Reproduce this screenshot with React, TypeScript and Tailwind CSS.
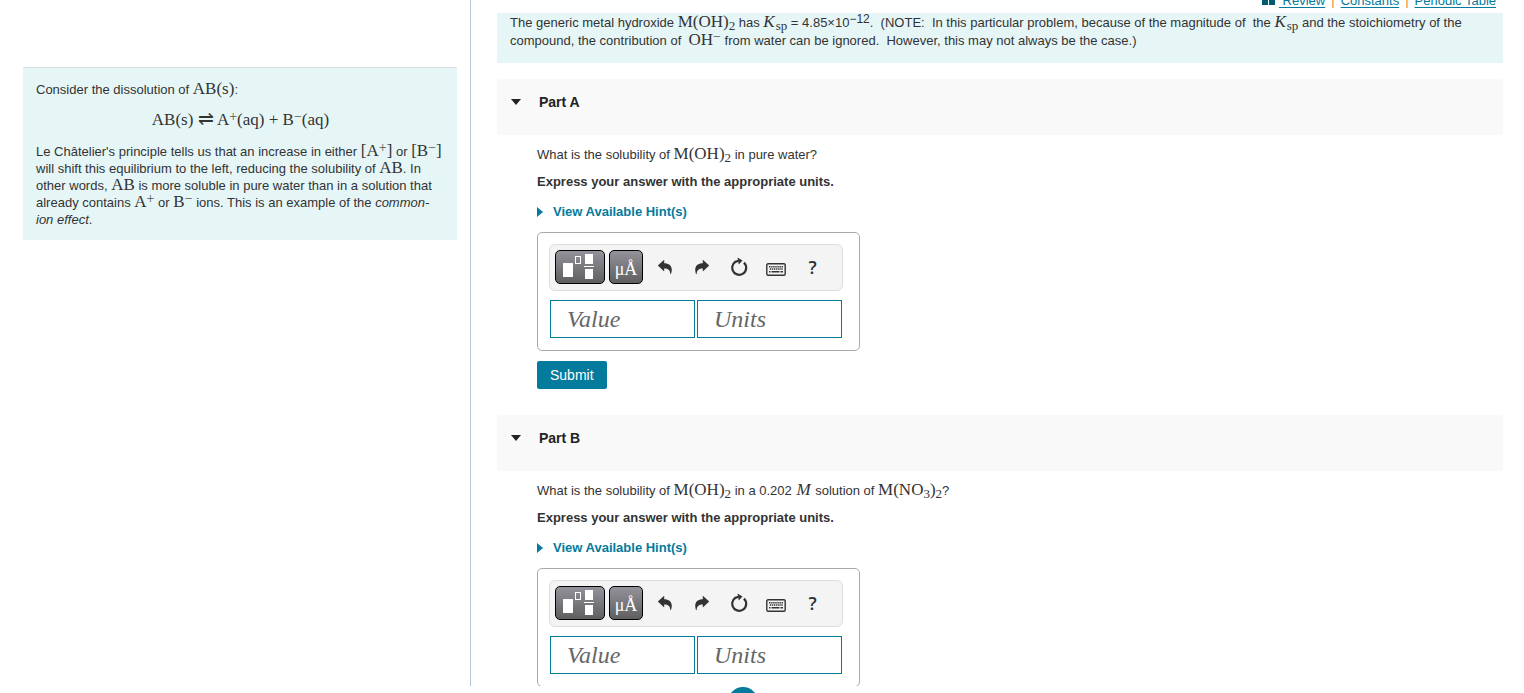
import type { ReactNode } from "react";

function Chem({ children }: { children: ReactNode }) {
  return (
    <span className="font-['Liberation_Serif',serif] text-[17px] leading-[0] whitespace-nowrap">
      {children}
    </span>
  );
}

function Sub({ children }: { children: ReactNode }) {
  return <sub className="text-[13px]">{children}</sub>;
}

function Charge({ children }: { children: ReactNode }) {
  return <span className="align-[4px] text-[14px] leading-[0] text-[#555]">{children}</span>;
}

const MetalHydroxide = () => (
  <Chem>
    M(OH)<Sub>2</Sub>
  </Chem>
);

const Ksp = () => (
  <Chem>
    <i className="pr-px">K</i>
    <Sub>sp</Sub>
  </Chem>
);

function UndoIcon() {
  return (
    <svg viewBox="0 0 16 16" className="h-4 w-4" fill="#333">
      <path d="M.8 6.500 7.200.800v3.400c5.400 0 9.200 3.300 6.900 10.600-.2.600-.8.600-.8 0C13.200 11 11 9.500 7.200 9.400v3z" />
    </svg>
  );
}

function RedoIcon() {
  return (
    <svg viewBox="0 0 16 16" className="h-4 w-4" fill="#333">
      <path d="M15.200 6.500 8.800.800v3.400c-5.400 0-9.200 3.300-6.900 10.600.2.600.8.600.8 0C2.800 11 5 9.500 8.800 9.400v3z" />
    </svg>
  );
}

function ResetIcon() {
  return (
    <svg viewBox="0 0 20 20" className="h-5 w-5" fill="none">
      <path d="M14.900 5.600A7 7 0 1 1 9.500 3.800" stroke="#333" strokeWidth="2.200" />
      <path d="M8.500.500 13.500 3.600 9.800 7.400z" fill="#333" />
    </svg>
  );
}

function KeyboardIcon() {
  return (
    <svg viewBox="0 0 20 13" className="h-[13px] w-5" fill="none">
      <rect x="0.800" y="0.800" width="18.400" height="11.400" rx="1.200" stroke="#333" strokeWidth="1.400" />
      <path d="M3 3.800h14M3.800 6h13.200" stroke="#333" strokeWidth="1.500" strokeDasharray="1.400 0.700" />
      <path d="M3 8.800h1.500M5.500 8.800h8M14.500 8.800H17" stroke="#333" strokeWidth="1.500" />
    </svg>
  );
}

function TemplatesIcon() {
  return (
    <svg viewBox="0 0 50 34" className="h-[34px] w-[50px] shrink-0" fill="#fff">
      <rect x="8" y="13" width="10" height="14" />
      <rect x="20.500" y="6.500" width="5" height="7" fill="none" stroke="#fff" />
      <rect x="30" y="4" width="8" height="10" />
      <rect x="29" y="16" width="10" height="1" />
      <rect x="30" y="19" width="8" height="10" />
    </svg>
  );
}

const darkButton =
  "flex h-[34px] items-center justify-center overflow-hidden rounded-[5px] border border-black bg-linear-to-b from-[#94939c] to-[#5f5f60] text-white";
const plainButton = "flex h-[34px] w-[37px] items-center justify-center text-[#333]";
const field =
  "h-[38px] min-w-0 flex-1 border border-[#047a9c] bg-white pl-4 font-['Liberation_Serif',serif] text-[24px] italic placeholder:text-[#666] placeholder:opacity-100";

function AnswerBox() {
  return (
    <div className="mt-[11px] w-[323px] rounded-[5px] border border-[#a9a9a9] pt-[11px] pr-4 pb-3 pl-[11px]">
      <div className="flex rounded-[6px] border border-[#ddd] bg-[#f4f4f4] pt-[5px] pb-[6px] pl-[5px]">
        <button aria-label="Templates" className={`${darkButton} w-[50px]`}>
          <TemplatesIcon />
        </button>
        <button
          aria-label="Symbols"
          className={`${darkButton} ml-1 w-[34px] pt-1 font-['Liberation_Serif',serif] text-[18px]`}
        >
          μÅ
        </button>
        <div className="ml-[3px] flex">
          <button aria-label="Undo" className={plainButton}>
            <UndoIcon />
          </button>
          <button aria-label="Redo" className={plainButton}>
            <RedoIcon />
          </button>
          <button aria-label="Reset" className={plainButton}>
            <ResetIcon />
          </button>
          <button aria-label="Keyboard shortcuts" className={`${plainButton} pt-1`}>
            <KeyboardIcon />
          </button>
          <button
            aria-label="Help"
            className={`${plainButton} font-['Open_Sans',sans-serif] text-[18px] font-semibold`}
          >
            ?
          </button>
        </div>
      </div>
      <div className="mx-px mt-[9px] flex gap-[2px]">
        <input aria-label="Value" placeholder="Value" className={field} />
        <input aria-label="Units" placeholder="Units" className={field} />
      </div>
    </div>
  );
}

function Part({ title, children }: { title: string; children: ReactNode }) {
  return (
    <section className="mb-[26px]">
      <h2 className="flex h-14 bg-[#f9f9f9] pt-[14px] pl-[14px] text-[14px] leading-[18px] font-bold text-[#222]">
        <button className="flex h-[18px] items-center gap-[18px]">
          <svg viewBox="0 0 10 6" className="h-[6px] w-[10px]" fill="#222">
            <path d="M0 0h10L5 6z" />
          </svg>
          {title}
        </button>
      </h2>
      <div className="flex flex-col items-start pt-[11px] pl-10">
        <p className="leading-[18px]">{children}</p>
        <p className="mt-[9px] leading-[18px] font-bold">
          Express your answer with the appropriate units.
        </p>
        <button className="mt-3 flex items-center gap-[10px] leading-[18px] font-bold text-[#047a9c]">
          <svg viewBox="0 0 6 10" className="h-[10px] w-[6px]" fill="#047a9c">
            <path d="M0 0v10l6-5z" />
          </svg>
          View Available Hint(s)
        </button>
        <AnswerBox />
        <button className="mt-[10px] h-7 rounded-[2px] bg-[#047a9c] px-[13px] text-[14px] text-white">
          Submit
        </button>
      </div>
    </section>
  );
}

export default function App() {
  return (
    <div className="flex h-screen flex-col overflow-hidden bg-white font-['Liberation_Sans',Arial,sans-serif] text-[13px] text-[#333]">
      <div className="flex min-h-0 flex-1">
        <aside className="w-[471px] shrink-0 overflow-hidden border-r border-[#b3c6da] pt-[67px] pr-[13px] pl-[23px]">
          <div className="border-t border-[#d5dfe0] bg-[#e6f6f7] pt-[13px] pr-3 pb-3 pl-[13px] leading-[17px]">
            <p>
              Consider the dissolution of <Chem>AB(s)</Chem>:
            </p>
            <p className="my-[14px] text-center">
              <Chem>
                AB(s) <span className="text-[19px]">⇌</span> A<Charge>+</Charge>(aq) + B
                <Charge>−</Charge>(aq)
              </Chem>
            </p>
            <p>
              Le Châtelier's principle tells us that an increase in either{" "}
              <Chem>
                [A<Charge>+</Charge>]
              </Chem>{" "}
              or{" "}
              <Chem>
                [B<Charge>−</Charge>]
              </Chem>{" "}
              will shift this equilibrium to the left, reducing the solubility of <Chem>AB</Chem>. In
              other words, <Chem>AB</Chem> is more soluble in pure water than in a solution that
              already contains{" "}
              <Chem>
                A<Charge>+</Charge>
              </Chem>{" "}
              or{" "}
              <Chem>
                B<Charge>−</Charge>
              </Chem>{" "}
              ions. This is an example of the <i>common-ion effect</i>.
            </p>
          </div>
        </aside>
        <main className="min-w-0 flex-1 overflow-hidden pr-[21px] pl-[26px]">
          <nav className="-mt-2 flex h-[21px] justify-end gap-[6px] pr-[7px] leading-[18px] text-[#d98a3d]">
            <a href="#review" className="flex gap-1 text-[#047a9c]">
              <svg viewBox="0 0 13 12" className="mt-px h-3 w-[13px]" fill="#005a70">
                <path d="M0 1h6v11H0zM7 1h6v11H7z" />
              </svg>
              <span className="whitespace-pre underline underline-offset-2"> Review</span>
            </a>
            |
            <a href="#constants" className="text-[#047a9c] underline underline-offset-2">
              Constants
            </a>
            |
            <a href="#periodic-table" className="text-[#047a9c] underline underline-offset-2">
              Periodic Table
            </a>
          </nav>
          <div className="mb-4 bg-[#e6f6f7] pt-px pr-[13px] pb-[13px] pl-[13px] leading-[18px]">
            The generic metal hydroxide <MetalHydroxide /> has <Ksp /> = 4.85×10
            <span className="align-[4px] text-[12px] leading-[0]">−12</span>.&nbsp; (NOTE:&nbsp; In
            this particular problem, because of the magnitude of&nbsp; the <Ksp /> and the
            stoichiometry of the compound, the contribution of&nbsp;{" "}
            <Chem>
              OH<Charge>−</Charge>
            </Chem>{" "}
            from water can be ignored.&nbsp; However, this may not always be the case.)
          </div>
          <Part title="Part A">
            What is the solubility of <MetalHydroxide /> in pure water?
          </Part>
          <Part title="Part B">
            What is the solubility of <MetalHydroxide /> in a 0.202{" "}
            <Chem>
              <i className="px-px">M</i>
            </Chem>{" "}
            solution of{" "}
            <Chem>
              M(NO<Sub>3</Sub>)<Sub>2</Sub>
            </Chem>
            ?
          </Part>
        </main>
      </div>
      <footer className="h-[7px] shrink-0 overflow-hidden pt-px pl-[728px]">
        <button
          aria-label="Help"
          className="h-[30px] w-[30px] rounded-full bg-[#047a9c] text-[20px] leading-[30px] font-bold text-white"
        >
          ?
        </button>
      </footer>
    </div>
  );
}
